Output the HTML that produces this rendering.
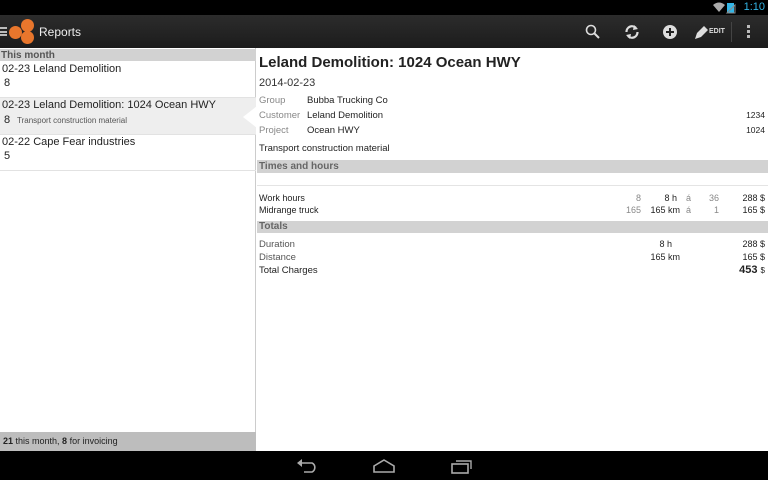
<!DOCTYPE html><html><head><style>
*{margin:0;padding:0;box-sizing:border-box}
body{width:768px;height:480px;overflow:hidden;background:#fff;font-family:"Liberation Sans",sans-serif;position:relative;color:#222}
.a{position:absolute;white-space:nowrap}
.sb{left:0;top:0;width:768px;height:15px;background:#000}
.ab{left:0;top:15px;width:768px;height:33px;background:linear-gradient(#2c2c2c,#1c1c1c)}
.nav{left:0;top:451px;width:768px;height:29px;background:#000}
.hd{background:#d2d2d2;color:#555;font-weight:bold;font-size:10px}
.r{font-size:9px}
.g{color:#888}
</style></head><body>
<div class="a sb"></div>
<div class="a" style="right:34px;top:3px;width:7px;height:10px;background:#33b5e5"></div>
<div class="a" style="right:3px;top:1px;font-size:11px;color:#33b5e5">1:10</div>
<svg class="a" style="left:712px;top:2px" width="24" height="12"><path d="M1 3 Q7 -2 13 3 L7 10Z" fill="#aaa"/><path d="M15 11 L23 3 L23 11Z" fill="none" stroke="#888"/></svg>
<div class="a ab"></div>
<div class="a" style="left:0;top:27px;width:7px;height:9px;border-top:2px solid #bbb;border-bottom:2px solid #bbb"></div>
<div class="a" style="left:0;top:30.5px;width:7px;height:2px;background:#bbb"></div>
<div class="a" style="left:9px;top:26px;width:13px;height:13px;border-radius:50%;background:#e8762c"></div>
<div class="a" style="left:21px;top:19px;width:13px;height:13px;border-radius:50%;background:#e8762c"></div>
<div class="a" style="left:21px;top:31px;width:13px;height:13px;border-radius:50%;background:#e8762c"></div>
<div class="a" style="left:39px;top:25px;font-size:12px;color:#eee">Reports</div>
<svg class="a" style="left:585px;top:24px" width="16" height="16"><circle cx="6" cy="6" r="4.5" fill="none" stroke="#ddd" stroke-width="1.6"/><path d="M9.5 9.5 L14 14" stroke="#ddd" stroke-width="2"/></svg>
<svg class="a" style="left:624px;top:24px" width="16" height="16"><path d="M2.5 8 A5.5 5.5 0 0 1 12 4" fill="none" stroke="#ddd" stroke-width="2.2"/><path d="M13.5 8 A5.5 5.5 0 0 1 4 12" fill="none" stroke="#ddd" stroke-width="2.2"/><path d="M10 1 L14 5 L9 6Z M6 15 L2 11 L7 10Z" fill="#ddd"/></svg>
<svg class="a" style="left:662px;top:24px" width="16" height="16"><circle cx="8" cy="8" r="7" fill="#ddd"/><path d="M8 4v8M4 8h8" stroke="#222" stroke-width="2"/></svg>
<svg class="a" style="left:694px;top:24px" width="16" height="16"><path d="M1 15 L3 9 L10 2 L14 6 L7 13Z" fill="#ddd"/></svg>
<div class="a" style="left:709px;top:28px;font-size:7px;font-weight:bold;color:#ddd">EDIT</div>
<div class="a" style="left:731px;top:22px;width:1px;height:20px;background:#444"></div>
<div class="a" style="left:747px;top:25px;width:3px;height:3px;background:#bbb;box-shadow:0 5px #bbb,0 10px #bbb"></div>
<!-- left panel -->
<div class="a" style="left:0;top:48px;width:256px;height:403px;border-right:1px solid #ccc"></div>
<div class="a hd" style="left:0;top:49px;width:256px;height:12px;padding-left:1px;line-height:13px">This month</div>
<div class="a" style="left:0;top:98px;width:256px;height:36px;background:#eee"></div>
<div class="a" style="left:0;top:97px;width:256px;height:1px;background:#e2e2e2"></div>
<div class="a" style="left:0;top:134px;width:256px;height:1px;background:#e2e2e2"></div>
<div class="a" style="left:0;top:170px;width:256px;height:1px;background:#e2e2e2"></div>
<svg class="a" style="left:241px;top:106px" width="16" height="22"><path d="M16 0 L2 11 L16 22Z" fill="#fff"/></svg>
<div class="a" style="left:2px;top:63px;font-size:11px">02-23 Leland Demolition</div>
<div class="a" style="left:4px;top:77px;font-size:11px">8</div>
<div class="a" style="left:2px;top:99px;font-size:11px">02-23 Leland Demolition: 1024 Ocean HWY</div>
<div class="a" style="left:4px;top:114px;font-size:11px">8</div>
<div class="a" style="left:17px;top:116px;font-size:8px;color:#555">Transport construction material</div>
<div class="a" style="left:2px;top:136px;font-size:11px">02-22 Cape Fear industries</div>
<div class="a" style="left:4px;top:150px;font-size:11px">5</div>
<div class="a" style="left:0;top:432px;width:256px;height:19px;background:#bdbdbd;font-size:9px;padding:4px 0 0 3px;color:#222"><b>21</b> this month, <b>8</b> for invoicing</div>
<!-- right -->
<div class="a" style="left:259px;top:54px;font-size:15px;font-weight:bold">Leland Demolition: 1024 Ocean HWY</div>
<div class="a" style="left:259px;top:77px;font-size:11px;color:#333">2014-02-23</div>
<div class="a g" style="left:259px;top:95px;font-size:9.5px">Group</div><div class="a" style="left:307px;top:95px;font-size:9.5px">Bubba Trucking Co</div>
<div class="a g" style="left:259px;top:110px;font-size:9.5px">Customer</div><div class="a" style="left:307px;top:110px;font-size:9.5px">Leland Demolition</div><div class="a" style="right:3px;top:110px;font-size:8.5px">1234</div>
<div class="a g" style="left:259px;top:125px;font-size:9.5px">Project</div><div class="a" style="left:307px;top:125px;font-size:9.5px">Ocean HWY</div><div class="a" style="right:3px;top:125px;font-size:8.5px">1024</div>
<div class="a" style="left:259px;top:143px;font-size:9.5px">Transport construction material</div>
<div class="a hd" style="left:257px;top:160px;width:511px;height:13px;padding:1px 0 0 2px;color:#666">Times and hours</div>
<div class="a" style="left:257px;top:185px;width:511px;height:1px;background:#e4e4e4"></div>
<div class="a r" style="left:259px;top:193px">Work hours</div>
<div class="a r g" style="right:127px;top:193px">8</div><div class="a r" style="right:91px;top:193px">8 h</div><div class="a r g" style="left:686px;top:193px">á</div><div class="a r g" style="right:49px;top:193px">36</div><div class="a r" style="right:3px;top:193px">288 $</div>
<div class="a r" style="left:259px;top:205px">Midrange truck</div>
<div class="a r g" style="right:127px;top:205px">165</div><div class="a r" style="right:88px;top:205px">165 km</div><div class="a r g" style="left:686px;top:205px">á</div><div class="a r g" style="right:49px;top:205px">1</div><div class="a r" style="right:3px;top:205px">165 $</div>
<div class="a hd" style="left:257px;top:221px;width:511px;height:12px;padding:0 0 0 2px;color:#666">Totals</div>
<div class="a" style="left:259px;top:239px;font-size:9.5px;color:#555">Duration</div><div class="a r" style="right:96px;top:239px">8 h</div><div class="a r" style="right:3px;top:239px">288 $</div>
<div class="a" style="left:259px;top:252px;font-size:9.5px;color:#555">Distance</div><div class="a r" style="right:88px;top:252px">165 km</div><div class="a r" style="right:3px;top:252px">165 $</div>
<div class="a" style="left:259px;top:265px;font-size:9.5px">Total Charges</div><div class="a" style="right:3px;top:264px;font-size:11px"><b>453</b> <span style="font-size:8px">$</span></div>
<div class="a nav"></div>
<svg class="a" style="left:296px;top:458px" width="24" height="16"><path d="M4 5 H16 A5 5 0 0 1 16 14 H8" fill="none" stroke="#aaa" stroke-width="1.6"/><path d="M1 5 L6 1 V9Z" fill="#aaa"/></svg>
<svg class="a" style="left:372px;top:458px" width="24" height="16"><path d="M2 8 L12 2 L22 8 V14 H2Z" fill="none" stroke="#aaa" stroke-width="1.6"/></svg>
<svg class="a" style="left:450px;top:458px" width="24" height="16"><rect x="2" y="6" width="16" height="9" fill="none" stroke="#aaa" stroke-width="1.6"/><path d="M6 3 H21 V11" fill="none" stroke="#aaa" stroke-width="1.4"/></svg>
</body></html>
